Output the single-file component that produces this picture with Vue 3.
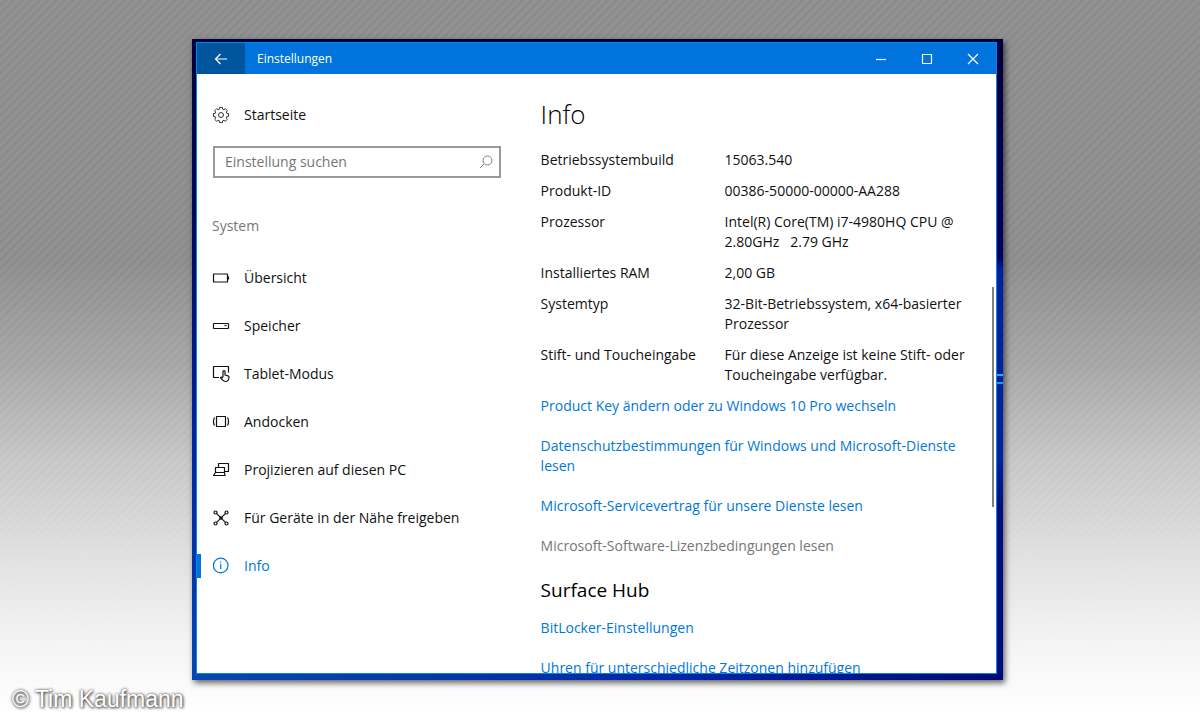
<template>
  <div class="desktop">
    <div class="frame">
      <div class="window">
        <header class="titlebar">
          <button class="back" type="button" aria-label="Zurück">
            <svg width="14" height="12" viewBox="0 0 14 12"><path d="M13 6H1.5M6.5 1L1.5 6l5 5" /></svg>
          </button>
          <span class="title">Einstellungen</span>
          <div class="window-controls">
            <button type="button" aria-label="Minimieren">
              <svg width="12" height="12" viewBox="0 0 12 12"><path d="M1 6.5h10" /></svg>
            </button>
            <button type="button" aria-label="Maximieren">
              <svg width="12" height="12" viewBox="0 0 12 12"><path d="M1.5 1.5h9v9h-9z" /></svg>
            </button>
            <button type="button" aria-label="Schließen">
              <svg width="12" height="12" viewBox="0 0 12 12"><path d="M1 1l10 10M11 1L1 11" /></svg>
            </button>
          </div>
        </header>

        <div class="body">
          <nav class="sidebar">
            <a class="nav-item home" href="#">
              <svg class="icon gear" viewBox="0 0 18 18">
                <path :d="gearPath" />
                <circle cx="9" cy="9" r="2.5" />
              </svg>
              <span>Startseite</span>
            </a>
            <div class="search">
              <input v-model="query" type="text" placeholder="Einstellung suchen" aria-label="Einstellung suchen" />
              <svg width="14" height="14" viewBox="0 0 14 14"><circle cx="8.5" cy="5.5" r="4.5" /><path d="M5.2 8.8L1 13" /></svg>
            </div>
            <h2 class="group">System</h2>
            <a
              v-for="item in items"
              :key="item.label"
              class="nav-item"
              :class="{ active: current === item.label }"
              href="#"
              @click.prevent="current = item.label"
            >
              <svg class="icon" viewBox="0 0 18 18"><path v-for="(d, i) in item.paths" :key="i" :d="d" /></svg>
              <span>{{ item.label }}</span>
            </a>
          </nav>

          <main class="content">
            <h1>Info</h1>
            <dl class="specs">
              <template v-for="row in specs" :key="row.name">
                <dt>{{ row.name }}</dt>
                <dd>{{ row.value }}</dd>
              </template>
            </dl>
            <div class="links">
              <a href="#">Product Key ändern oder zu Windows 10 Pro wechseln</a>
              <a href="#">Datenschutzbestimmungen für Windows und Microsoft-Dienste lesen</a>
              <a href="#">Microsoft-Servicevertrag für unsere Dienste lesen</a>
              <a class="muted" href="#">Microsoft-Software-Lizenzbedingungen lesen</a>
            </div>
            <h2>Surface Hub</h2>
            <div class="links">
              <a href="#">BitLocker-Einstellungen</a>
              <a href="#">Uhren für unterschiedliche Zeitzonen hinzufügen</a>
            </div>
          </main>
          <div class="scrollbar"><div class="thumb"></div></div>
        </div>
      </div>
    </div>
    <div class="credit">© Tim Kaufmann</div>
  </div>
</template>

<script setup>
import { ref } from 'vue'

const query = ref('')
const current = ref('Info')

// eight teeth around the centre of an 18x18 box
const gearPath = (() => {
  const points = []
  for (let i = 0; i < 8; i++) {
    const base = (i * Math.PI) / 4
    const corners = [[-0.27, 6], [-0.2, 7.7], [0.2, 7.7], [0.27, 6]]
    corners.forEach(([offset, r]) => {
      const a = base + offset
      points.push(`${(9 + r * Math.sin(a)).toFixed(2)} ${(9 - r * Math.cos(a)).toFixed(2)}`)
    })
  }
  return `M${points.join('L')}Z`
})()

const items = [
  { label: 'Übersicht', paths: ['M1.5 5h14v8h-14z', 'M16.5 7.5v3'] },
  { label: 'Speicher', paths: ['M2 6.5h14a.5.5 0 0 1 .5.5v4a.5.5 0 0 1-.5.5H2a.5.5 0 0 1-.5-.5V7a.5.5 0 0 1 .5-.5z', 'M12.5 8.5h2'] },
  {
    label: 'Tablet-Modus',
    paths: [
      'M7 12.5H1.5v-11h15v6',
      'M11 12V6.500c0-1.300 2-1.300 2 0V10l3 .8c.8.200 1 .6 1 1.200-.1 2.600-1 4.500-3.700 4.500-2 0-3-1.200-4.600-3.300-.6-.8.6-1.700 2.300-.2',
    ],
  },
  { label: 'Andocken', paths: ['M4.5 3.5h9v10h-9z', 'M2.500 4.500C1.200 7 1.200 10 2.500 12.500', 'M15.500 4.500c1.300 2.500 1.300 5.500 0 8'] },
  { label: 'Projizieren auf diesen PC', paths: ['M6.5 6.5v-4h10v8h-4', 'M3.5 11.500v-5h9v5', 'M3.5 11.500h9l.5 3H1.500z'] },
  {
    label: 'Für Geräte in der Nähe freigeben',
    paths: [
      'M4.600 4.600l8.800 8.800M13.400 4.600l-8.800 8.800',
      'M5 3.500a1.500 1.500 0 1 1-3 0a1.500 1.500 0 0 1 3 0z',
      'M16 3.500a1.500 1.500 0 1 1-3 0a1.500 1.500 0 0 1 3 0z',
      'M5 14.500a1.500 1.500 0 1 1-3 0a1.500 1.500 0 0 1 3 0z',
      'M16 14.500a1.500 1.500 0 1 1-3 0a1.500 1.500 0 0 1 3 0z',
      'M8 8h2v2H8z',
    ],
  },
  { label: 'Info', paths: ['M16 8.500A7.300 7.300 0 1 1 1.400 8.500A7.300 7.300 0 0 1 16 8.500z', 'M8.700 7v5M8.700 4.500v1.200'] },
]

const specs = [
  { name: 'Betriebssystembuild', value: '15063.540' },
  { name: 'Produkt-ID', value: '00386-50000-00000-AA288' },
  { name: 'Prozessor', value: 'Intel(R) Core(TM) i7-4980HQ CPU @ 2.80GHz   2.79 GHz' },
  { name: 'Installiertes RAM', value: '2,00 GB' },
  { name: 'Systemtyp', value: '32-Bit-Betriebssystem, x64-basierter Prozessor' },
  { name: 'Stift- und Toucheingabe', value: 'Für diese Anzeige ist keine Stift- oder Toucheingabe verfügbar.' },
]
</script>

<style>
body {
  margin: 0;
}
</style>

<style scoped>
.desktop {
  box-sizing: border-box;
  position: relative;
  height: 100vh;
  padding: 39px 197px 40px 192px;
  background:
    linear-gradient(
      rgba(255, 255, 255, 0) 36%,
      rgba(255, 255, 255, 0.23) 51%,
      rgba(255, 255, 255, 0.51) 64%,
      rgba(255, 255, 255, 0.73) 77%,
      rgba(255, 255, 255, 0.9) 89%,
      #ffffff 99%
    ),
    repeating-linear-gradient(135deg, #929292 0 2px, #8b8b8b 3px 5px, #929292 6px);
  color: #111111;
  font: 14px/20px 'Open Sans', 'Noto Sans', sans-serif;
}

/* the wallpaper that shows around the window */
.frame {
  box-sizing: border-box;
  height: 100%;
  padding: 3px 6px 6px 4px;
  background:
    linear-gradient(
      transparent 335px,
      #18b4f0 335px 337px,
      transparent 337px 343px,
      #18a0e8 343px 345px,
      transparent 345px
    ) right / 6px 100% no-repeat,
    linear-gradient(#00003a 0%, #000060 34%, #0020a0 36%, #00209c 66%, #000a78 74%, #000a78 100%) right / 6px 100% no-repeat,
    linear-gradient(90deg, #0548b0, #0426a8 60%, #000a78) bottom / 100% 6px no-repeat,
    linear-gradient(#00003a 0%, #000a5c 30%, #04209a 60%, #0548b0 100%);
  box-shadow: 2px 3px 6px rgba(0, 0, 0, 0.6);
}

.window {
  box-sizing: border-box;
  display: flex;
  flex-direction: column;
  height: 100%;
  border: 1px solid #0a84e8;
  background: #ffffff;
}

.titlebar {
  display: flex;
  align-items: center;
  height: 31px;
  flex: none;
  background: #0074dc;
  color: #ffffff;
}

.titlebar button {
  display: flex;
  align-items: center;
  justify-content: center;
  width: 46px;
  height: 100%;
  padding: 0;
  border: 0;
  background: transparent;
}

.titlebar .back {
  width: 48px;
  background: #00559f;
}

.titlebar svg {
  fill: none;
  stroke: #ffffff;
  stroke-width: 1.2;
}

.title {
  margin-left: 12px;
  font-size: 12px;
}

.window-controls {
  display: flex;
  height: 100%;
  margin-left: auto;
}

.body {
  display: flex;
  flex: 1;
  min-height: 0;
}

.sidebar {
  width: 40%;
  flex: none;
  padding-top: 17px;
}

.nav-item {
  display: flex;
  align-items: center;
  gap: 14px;
  height: 24px;
  margin-bottom: 24px;
  padding-left: 11px;
  border-left: 4px solid transparent;
  color: inherit;
  text-decoration: none;
}

.nav-item.home {
  height: 48px;
  margin-bottom: 7px;
}

.nav-item.active {
  border-left-color: #0074dc;
  color: #0078d7;
}

.icon {
  width: 18px;
  height: 18px;
  flex: none;
  fill: none;
  stroke: currentColor;
  stroke-width: 1.2;
  stroke-linejoin: round;
}

.gear {
  stroke: #333333;
  stroke-width: 1;
}

.search {
  box-sizing: border-box;
  display: flex;
  align-items: center;
  height: 32px;
  margin: 0 16px;
  padding-right: 6px;
  border: 2px solid #999999;
}

.search input {
  flex: 1;
  min-width: 0;
  padding: 0 10px;
  border: 0;
  outline: 0;
  background: transparent;
  color: inherit;
  font: inherit;
}

.search input::placeholder {
  color: #767676;
  opacity: 1;
}

.search svg {
  fill: none;
  stroke: #808080;
}

.group {
  margin: 38px 15px 30px;
  color: #767676;
  font-size: 14px;
  font-weight: 400;
}

.content {
  flex: 1;
  min-width: 0;
  padding: 24px 18px 0 24px;
  overflow: hidden;
}

h1 {
  margin: 0 0 20px;
  color: #000000;
  font-size: 26px;
  font-weight: 300;
  line-height: 32px;
}

.content h2 {
  margin: 24px 0 18px;
  color: #000000;
  font-size: 19px;
  font-weight: 400;
  line-height: 20px;
}

.specs {
  display: grid;
  grid-template-columns: 172px 1fr;
  gap: 11px 12px;
  margin: 0 0 11px;
}

.specs dd {
  margin: 0;
  white-space: pre-wrap;
}

.links {
  display: flex;
  flex-direction: column;
  align-items: flex-start;
  gap: 20px;
}

.links a {
  color: #0078d7;
  text-decoration: none;
}

.links .muted {
  color: #767676;
}

.scrollbar {
  display: flex;
  flex-direction: column;
  width: 4px;
  flex: none;
  padding-top: 213px;
}

.thumb {
  width: 2px;
  height: 220px;
  background: #808080;
}

.credit {
  position: absolute;
  left: 12px;
  bottom: 8px;
  color: #ffffff;
  font: 23px/26px 'Liberation Sans', sans-serif;
  text-shadow: 0 0 3px #444444, 1px 1px 3px #444444;
}
</style>
